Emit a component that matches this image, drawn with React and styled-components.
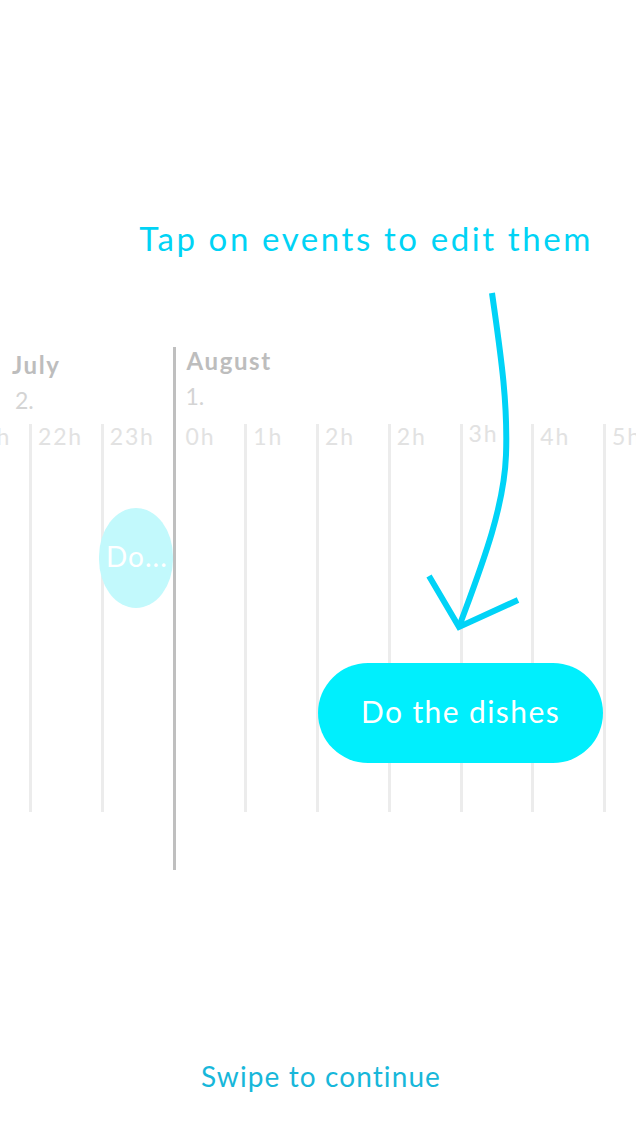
import React from "react";
import styled, { createGlobalStyle } from "styled-components";

const GlobalStyle = createGlobalStyle`
  html, body { margin: 0; padding: 0; background: #ffffff; }
  body { font-family: "Lato", "Open Sans", sans-serif; overflow: hidden; }
`;

const COL = 71.75;

const Page = styled.div`
  position: relative;
  width: 636px;
  height: 1135px;
  overflow: hidden;
  display: flex;
  flex-direction: column;
  background: #fff;
`;

const Title = styled.h1`
  margin: 219px 0 0 0;
  padding-right: 43px;
  text-align: right;
  font-family: "Lato", sans-serif;
  font-weight: 400;
  font-size: 33px;
  line-height: 38px;
  letter-spacing: 2.6px;
  color: #00d3f5;
`;

const Timeline = styled.div`
  position: relative;
  margin-top: 90px;
  margin-left: ${-COL + 29}px;
  display: flex;
  height: 523px;
`;

const Day = styled.div`
  display: flex;
  flex-direction: column;
  box-sizing: border-box;
  border-left: ${(p) => (p.$divider ? "3px solid #bfbfbf" : "none")};
  padding-bottom: 58px;
`;

const DayHeader = styled.div`
  height: 77px;
  box-sizing: border-box;
  padding-top: ${(p) => p.$top}px;
  padding-left: ${(p) => p.$left}px;
  display: flex;
  flex-direction: column;
`;

const Month = styled.div`
  font-weight: 700;
  font-size: 24px;
  line-height: 26px;
  color: #bdbdbd;
  letter-spacing: 1.6px;
`;

const DateNum = styled.div`
  font-size: 23px;
  line-height: 26px;
  margin-top: 9px;
  margin-left: ${(p) => p.$shift}px;
  color: #d4d4d4;
`;

const Hours = styled.div`
  display: flex;
  height: 388px;
`;

const HourCol = styled.div`
  box-sizing: border-box;
  width: ${(p) => (p.$first ? COL - 3 : COL)}px;
  flex: none;
  border-left: ${(p) => (p.$first ? "none" : "3px solid #ececec")};
  padding-left: ${(p) => (p.$first ? 10 : 6)}px;
`;

const HourLabel = styled.div`
  font-size: 23px;
  line-height: 24px;
  margin-top: ${(p) => (p.$raised ? -3 : 0)}px;
  letter-spacing: 1.8px;
  color: #e2e2e2;
  white-space: nowrap;
`;

const Event = styled.div`
  position: absolute;
  box-sizing: border-box;
  display: flex;
  align-items: center;
  justify-content: ${(p) => (p.$ghost ? "flex-start" : "center")};
  padding-left: ${(p) => (p.$ghost ? 7 : 0)}px;
  padding-bottom: 5px;
  height: 100px;
  border-radius: ${(p) => (p.$ghost ? "38px / 50px" : "50px")};
  background: ${(p) => (p.$ghost ? "#c2f9fc" : "#00effd")};
  color: #ffffff;
  font-size: ${(p) => (p.$ghost ? 28 : 30)}px;
  letter-spacing: ${(p) => (p.$ghost ? 1 : 1.4)}px;
  white-space: nowrap;
  overflow: hidden;
`;

const Arrow = styled.svg`
  position: absolute;
  left: 0;
  top: 0;
  pointer-events: none;
`;

const Spacer = styled.div`
  flex: 1;
`;

const Footer = styled.div`
  text-align: center;
  padding-left: 6px;
  margin-bottom: 42px;
  font-size: 28px;
  line-height: 34px;
  letter-spacing: 1.1px;
  color: #17b7da;
`;

const julyHours = ["21h", "22h", "23h"];
const augustHours = ["0h", "1h", "2h", "2h", "3h", "4h", "5h"];

export default function App() {
  return (
    <Page>
      <GlobalStyle />
      <Title>Tap on events to edit them</Title>
      <Timeline>
        <Day>
          <DayHeader $top={5} $left={COL - 29 + 12}>
            <Month>July</Month>
            <DateNum $shift={3}>2.</DateNum>
          </DayHeader>
          <Hours>
            {julyHours.map((h) => (
              <HourCol key={h} $first={false}>
                <HourLabel>{h}</HourLabel>
              </HourCol>
            ))}
          </Hours>
        </Day>
        <Day $divider>
          <DayHeader $top={1} $left={11}>
            <Month>August</Month>
            <DateNum $shift={-1}>1.</DateNum>
          </DayHeader>
          <Hours>
            {augustHours.map((h, i) => (
              <HourCol key={i} $first={i === 0}>
                <HourLabel $raised={h === "3h"}>{h}</HourLabel>
              </HourCol>
            ))}
          </Hours>
        </Day>
        <Event $ghost style={{ left: COL - 29 + 99, top: 161, width: 74 }}>
          Do...
        </Event>
        <Event style={{ left: COL - 29 + 318, top: 316, width: 285 }}>
          Do the dishes
        </Event>
      </Timeline>
      <Spacer />
      <Footer>Swipe to continue</Footer>
      <Arrow width="636" height="1135" viewBox="0 0 636 1135">
        <path
          d="M492 293 C 500 350, 508 400, 506 455 C 504 510, 480 570, 459 627"
          fill="none"
          stroke="#00d3f7"
          strokeWidth="6"
        />
        <path
          d="M429 576 L459 627 L518 600"
          fill="none"
          stroke="#00d3f7"
          strokeWidth="6"
        />
      </Arrow>
    </Page>
  );
}
